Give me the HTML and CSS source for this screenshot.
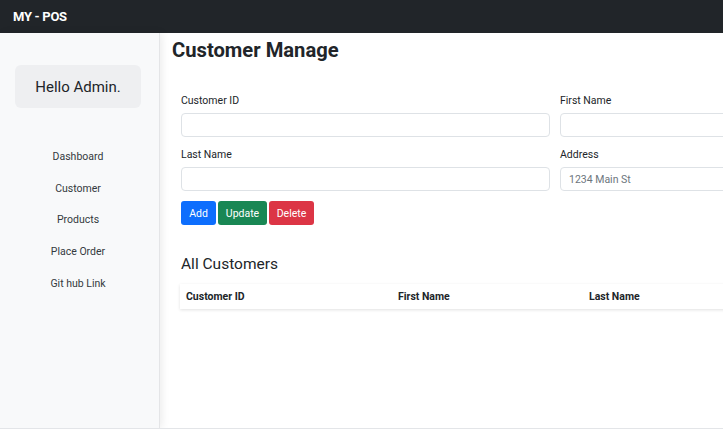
FILE: index.html
```html
<!DOCTYPE html>
<html lang="en">
<head>
<meta charset="utf-8">
<title>MY - POS</title>
<link rel="stylesheet" href="styles.css">
</head>
<body>
<header class="topbar">
  <span class="brand">MY - POS</span>
</header>
<div class="layout">
  <aside class="sidebar">
    <div class="hello">Hello Admin.</div>
    <nav class="menu">
      <a href="#">Dashboard</a>
      <a href="#">Customer</a>
      <a href="#">Products</a>
      <a href="#">Place Order</a>
      <a href="#">Git hub Link</a>
    </nav>
  </aside>
  <main class="main">
    <h1 class="title">Customer Manage</h1>
    <form class="form">
      <div class="grid">
        <label class="field"><span class="label">Customer ID</span><input class="input" type="text"></label>
        <label class="field"><span class="label">First Name</span><input class="input" type="text"></label>
        <label class="field"><span class="label">Last Name</span><input class="input" type="text"></label>
        <label class="field"><span class="label">Address</span><input class="input" type="text" placeholder="1234 Main St"></label>
      </div>
      <div class="actions">
        <button type="button" class="btn btn-add">Add</button>
        <button type="button" class="btn btn-update">Update</button>
        <button type="button" class="btn btn-delete">Delete</button>
      </div>
    </form>
    <h2 class="subtitle">All Customers</h2>
    <table class="table">
      <thead>
        <tr>
          <th class="c1">Customer ID</th>
          <th class="c2">First Name</th>
          <th class="c3">Last Name</th>
          <th class="c4"></th>
        </tr>
      </thead>
    </table>
  </main>
</div>
</body>
</html>
```
FILE: styles.css
```css
* { box-sizing: border-box; }
html, body { margin: 0; padding: 0; }
body {
  width: 723px;
  height: 429px;
  overflow: hidden;
  font-family: Roboto, "Liberation Sans", sans-serif;
  color: #212529;
  background: #fff;
  border-bottom: 1px solid #e3e5e8;
}
.topbar {
  height: 33px;
  background: #212529;
  display: flex;
  align-items: center;
  padding-left: 13px;
}
.brand {
  color: #fff;
  font-weight: 700;
  font-size: 13px;
  letter-spacing: -0.3px;
}
.layout {
  display: flex;
  height: 395px;
}
.sidebar {
  width: 159px;
  flex: none;
  background: #f8f9fa;
  box-shadow: 1px 0 0 #e4e5e7, 3px 0 8px rgba(0,0,0,0.08);
  position: relative;
  z-index: 1;
  padding: 32px 18px 0 15px;
}
.hello {
  height: 43px;
  width: 126px;
  background: #eeeff1;
  border-radius: 6px;
  display: flex;
  align-items: center;
  justify-content: center;
  font-size: 15px;
  color: #212529;
}
.menu {
  display: flex;
  flex-direction: column;
  align-items: center;
  width: 126px;
  margin-top: 33px;
}
.menu a {
  display: block;
  height: 31.7px;
  line-height: 31.7px;
  font-size: 10.5px;
  color: #343a40;
  text-decoration: none;
}
.main {
  flex: 1;
  min-width: 0;
  overflow: hidden;
  padding: 4px 0 0 13px;
}
.title {
  margin: 0;
  font-size: 20.2px;
  font-weight: 700;
  line-height: 27px;
  color: #212529;
}
.form {
  width: 760px;
  padding-left: 9px;
  margin-top: 31px;
}
.grid {
  display: grid;
  grid-template-columns: 369px 369px;
  column-gap: 10px;
  row-gap: 12px;
}
.field {
  display: flex;
  flex-direction: column;
}
.label {
  font-size: 10.5px;
  line-height: 12px;
  margin-bottom: 6px;
  color: #212529;
}
.input {
  height: 24px;
  border: 1px solid #dee2e6;
  border-radius: 4px;
  font-family: inherit;
  font-size: 10.5px;
  padding: 0 8px;
  color: #212529;
  background: #fff;
}
.input::placeholder { color: #6c757d; }
.actions {
  display: flex;
  gap: 2px;
  margin-top: 10px;
}
.btn {
  height: 24px;
  border: none;
  border-radius: 3px;
  color: #fff;
  font-family: inherit;
  font-size: 10.5px;
  padding: 0;
}
.btn-add { background: #0d6efd; width: 35px; }
.btn-update { background: #198754; width: 49px; }
.btn-delete { background: #dc3545; width: 45px; }
.subtitle {
  margin: 29px 0 0 9px;
  font-size: 15.5px;
  font-weight: 400;
  line-height: 20px;
  color: #212529;
}
.table {
  margin: 10px 0 0 8px;
  border-collapse: collapse;
  width: 570px;
  box-shadow: 0 1px 3px rgba(0,0,0,0.12);
}
.table th {
  text-align: left;
  font-size: 10.5px;
  font-weight: 700;
  height: 25px;
  padding: 0 6px;
  color: #212529;
}
.c1 { width: 212px; }
.c2 { width: 191px; }
.c3 { width: 127px; }
```
